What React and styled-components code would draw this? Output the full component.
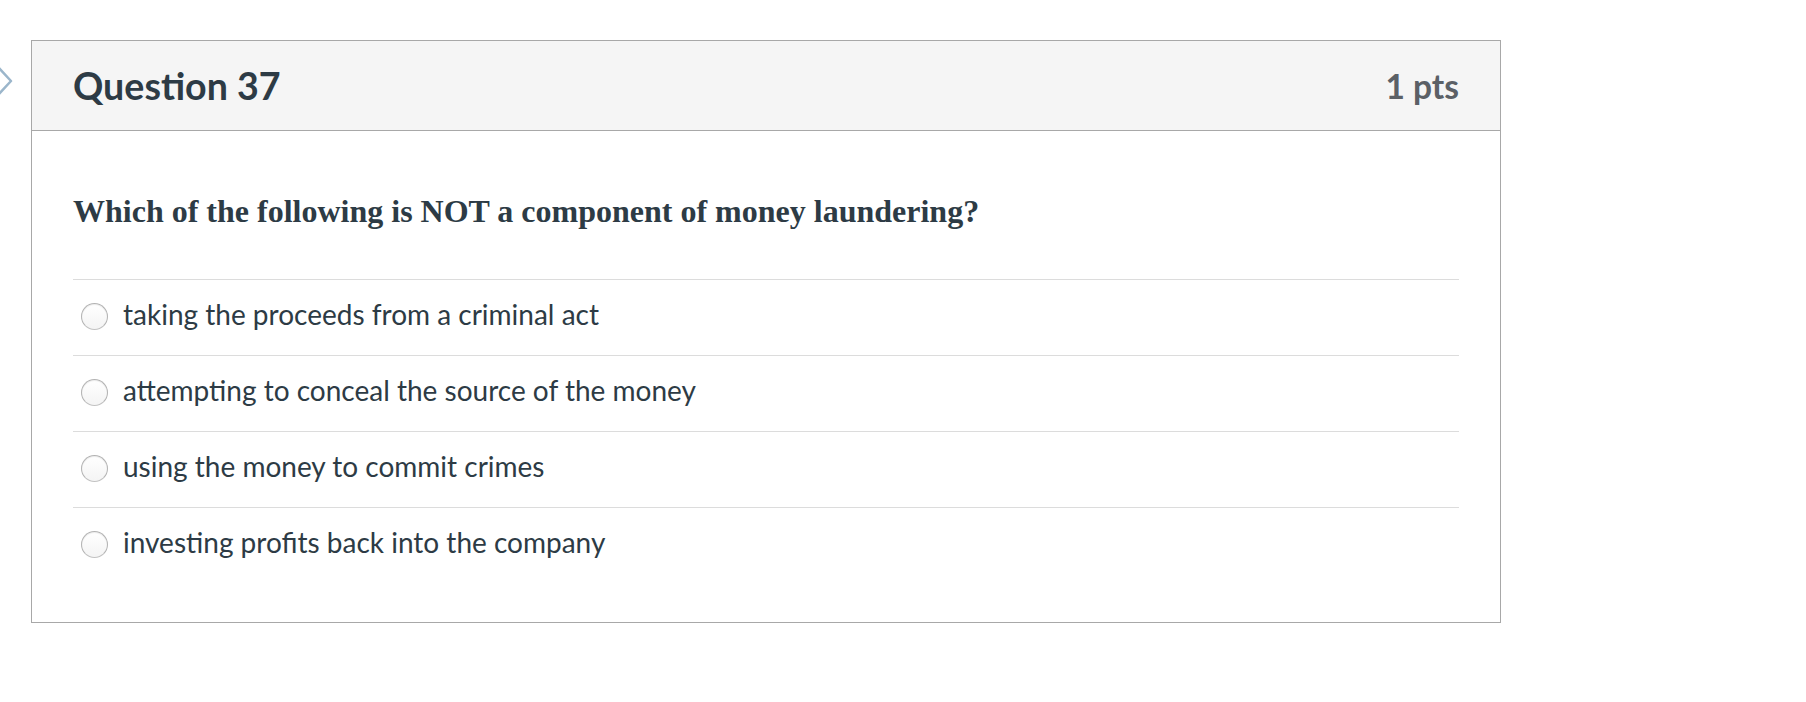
import React from 'react';
import styled, { createGlobalStyle } from 'styled-components';

const GlobalStyle = createGlobalStyle`
  body {
    margin: 0;
    background: #ffffff;
    font-family: Lato, "Open Sans", sans-serif;
  }
`;

const Page = styled.div`
  display: flex;
  align-items: flex-start;
  padding-top: 40px;
`;

const Chevron = styled.svg`
  width: 31px;
  height: 30px;
  margin-top: 26px;
  flex-shrink: 0;
`;

const Card = styled.div`
  width: 1468px;
  border: 1px solid #a8a8a8;
  background: #fff;
`;

const Header = styled.div`
  height: 89px;
  display: flex;
  align-items: center;
  justify-content: space-between;
  padding: 0 41px;
  background: #f5f5f5;
  border-bottom: 1px solid #a8a8a8;
`;

const Title = styled.h2`
  margin: 0;
  font-family: Lato, sans-serif;
  font-weight: 700;
  font-size: 37.6px;
  color: #2d3b45;
`;

const Points = styled.div`
  font-family: Lato, sans-serif;
  font-weight: 700;
  font-size: 33.5px;
  color: #5b6066;
`;

const Body = styled.div`
  padding: 60px 41px 39px;
`;

const QuestionText = styled.p`
  margin: 0 0 48px;
  font-family: "Liberation Serif", "Times New Roman", serif;
  font-weight: 700;
  font-size: 32px;
  line-height: 40px;
  color: #2d3b45;
`;

const Answer = styled.label`
  height: 75px;
  display: flex;
  align-items: center;
  border-top: 1px solid #dcdcdc;
  cursor: pointer;
`;

const Radio = styled.span`
  width: 25px;
  height: 25px;
  margin: 0 15px 3px 8px;
  border-radius: 50%;
  border: 1px solid #b3b3b3;
  border-bottom-color: #c2c2c2;
  background: linear-gradient(#ffffff, #f4f4f4);
  box-shadow: inset 0 1px 1px rgba(0, 0, 0, 0.08);
  flex-shrink: 0;
`;

const AnswerText = styled.span`
  padding-bottom: 8px;
  font-family: Lato, sans-serif;
  font-size: 28px;
  color: #2d3b45;
`;

const answers = [
  'taking the proceeds from a criminal act',
  'attempting to conceal the source of the money',
  'using the money to commit crimes',
  'investing profits back into the company'
];

const App = () => (
  <>
    <GlobalStyle />
    <Page>
      <Chevron viewBox="0 0 31 30">
        <polyline points="-2,1 11,15 -2,29" fill="none" stroke="#9bb6cb" strokeWidth="2.5" strokeLinejoin="round" />
      </Chevron>
      <Card>
        <Header>
          <Title>Question 37</Title>
          <Points>1 pts</Points>
        </Header>
        <Body>
          <QuestionText>Which of the following is NOT a component of money laundering?</QuestionText>
          {answers.map(a => (
            <Answer key={a}>
              <Radio />
              <AnswerText>{a}</AnswerText>
            </Answer>
          ))}
        </Body>
      </Card>
    </Page>
  </>
);

export default App;
